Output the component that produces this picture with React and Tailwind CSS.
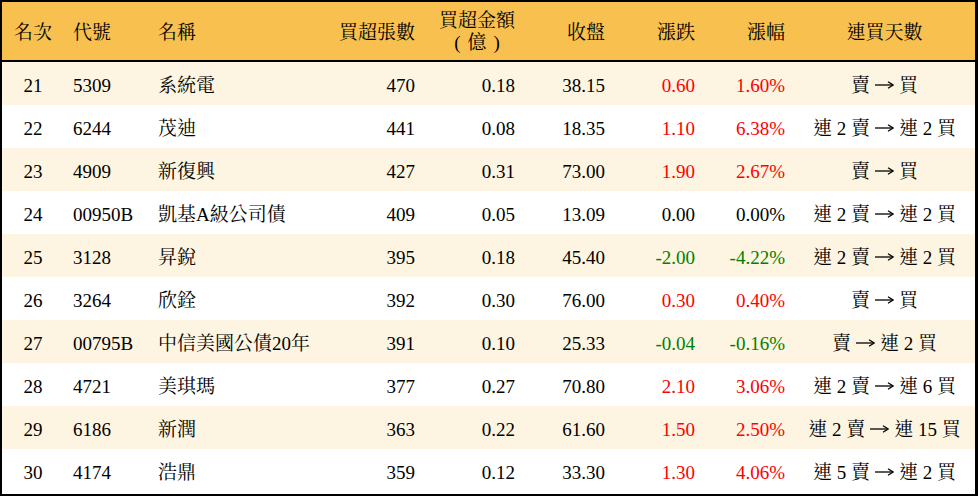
import React from "react";

const rows = [
  ["21", "5309", "系統電", "470", "0.18", "38.15", "0.60", "1.60%", ["賣", "買"]],
  ["22", "6244", "茂迪", "441", "0.08", "18.35", "1.10", "6.38%", ["連 2 賣", "連 2 買"]],
  ["23", "4909", "新復興", "427", "0.31", "73.00", "1.90", "2.67%", ["賣", "買"]],
  ["24", "00950B", "凱基A級公司債", "409", "0.05", "13.09", "0.00", "0.00%", ["連 2 賣", "連 2 買"]],
  ["25", "3128", "昇銳", "395", "0.18", "45.40", "-2.00", "-4.22%", ["連 2 賣", "連 2 買"]],
  ["26", "3264", "欣銓", "392", "0.30", "76.00", "0.30", "0.40%", ["賣", "買"]],
  ["27", "00795B", "中信美國公債20年", "391", "0.10", "25.33", "-0.04", "-0.16%", ["賣", "連 2 買"]],
  ["28", "4721", "美琪瑪", "377", "0.27", "70.80", "2.10", "3.06%", ["連 2 賣", "連 6 買"]],
  ["29", "6186", "新潤", "363", "0.22", "61.60", "1.50", "2.50%", ["連 2 賣", "連 15 買"]],
  ["30", "4174", "浩鼎", "359", "0.12", "33.30", "1.30", "4.06%", ["連 5 賣", "連 2 買"]],
];

const cols = "grid grid-cols-[62px_85px_185px_90px_100px_90px_90px_90px_181px]";

function colorOf(v) {
  const n = parseFloat(v);
  if (n > 0) return "text-[#ff0000]";
  if (n < 0) return "text-[#008000]";
  return "text-black";
}

export default function App() {
  return (
    <div
      className="w-[978px] h-[496px] bg-white text-black text-[19px] leading-none"
      style={{ fontFamily: '"Liberation Serif", "Noto Serif CJK TC", "Noto Sans CJK TC", serif' }}
    >
      <div className="border-t-2 border-l-2 border-r-[3px] border-b-2 border-black w-[978px] h-[496px] flex flex-col">
        <div className={`${cols} h-[60px] bg-[#f8c14f] border-b-2 border-black items-center pt-[3px]`}>
          <div className="text-center">名次</div>
          <div className="pl-[9px]">代號</div>
          <div className="pl-[9px]">名稱</div>
          <div className="text-right pr-[9px]">買超張數</div>
          <div className="flex justify-end pr-[9px] -mt-[3px]">
            <div className="flex flex-col items-center gap-[3px]">
              <span>買超金額</span>
              <span className="flex items-center gap-[7px]">
                <span>(</span>
                <span>億</span>
                <span>)</span>
              </span>
            </div>
          </div>
          <div className="text-right pr-[9px]">收盤</div>
          <div className="text-right pr-[9px]">漲跌</div>
          <div className="text-right pr-[9px]">漲幅</div>
          <div className="text-center">連買天數</div>
        </div>
        {rows.map((r, i) => (
          <div
            key={r[0]}
            className={`${cols} h-[43px] items-center pt-[3px] ${i % 2 === 0 ? "bg-[#fdf5e1]" : "bg-white"}`}
          >
            <div className="text-center">{r[0]}</div>
            <div className="pl-[9px]">{r[1]}</div>
            <div className="pl-[9px] whitespace-nowrap">{r[2]}</div>
            <div className="text-right pr-[9px]">{r[3]}</div>
            <div className="text-right pr-[9px]">{r[4]}</div>
            <div className="text-right pr-[9px]">{r[5]}</div>
            <div className={`text-right pr-[9px] ${colorOf(r[6])}`}>{r[6]}</div>
            <div className={`text-right pr-[9px] ${colorOf(r[7])}`}>{r[7]}</div>
            <div className="flex justify-center items-center whitespace-pre">
              <span>{r[8][0]}</span>
              <span className="mx-[5px] w-[19px] flex items-center">
                <svg width="19" height="10" viewBox="0 0 19 10" className="block">
                  <line x1="0" y1="5" x2="17" y2="5" stroke="black" strokeWidth="1.3" />
                  <path d="M13 1.8 L18.2 5 L13 8.2" fill="none" stroke="black" strokeWidth="1.3" />
                </svg>
              </span>
              <span>{r[8][1]}</span>
            </div>
          </div>
        ))}
      </div>
    </div>
  );
}
